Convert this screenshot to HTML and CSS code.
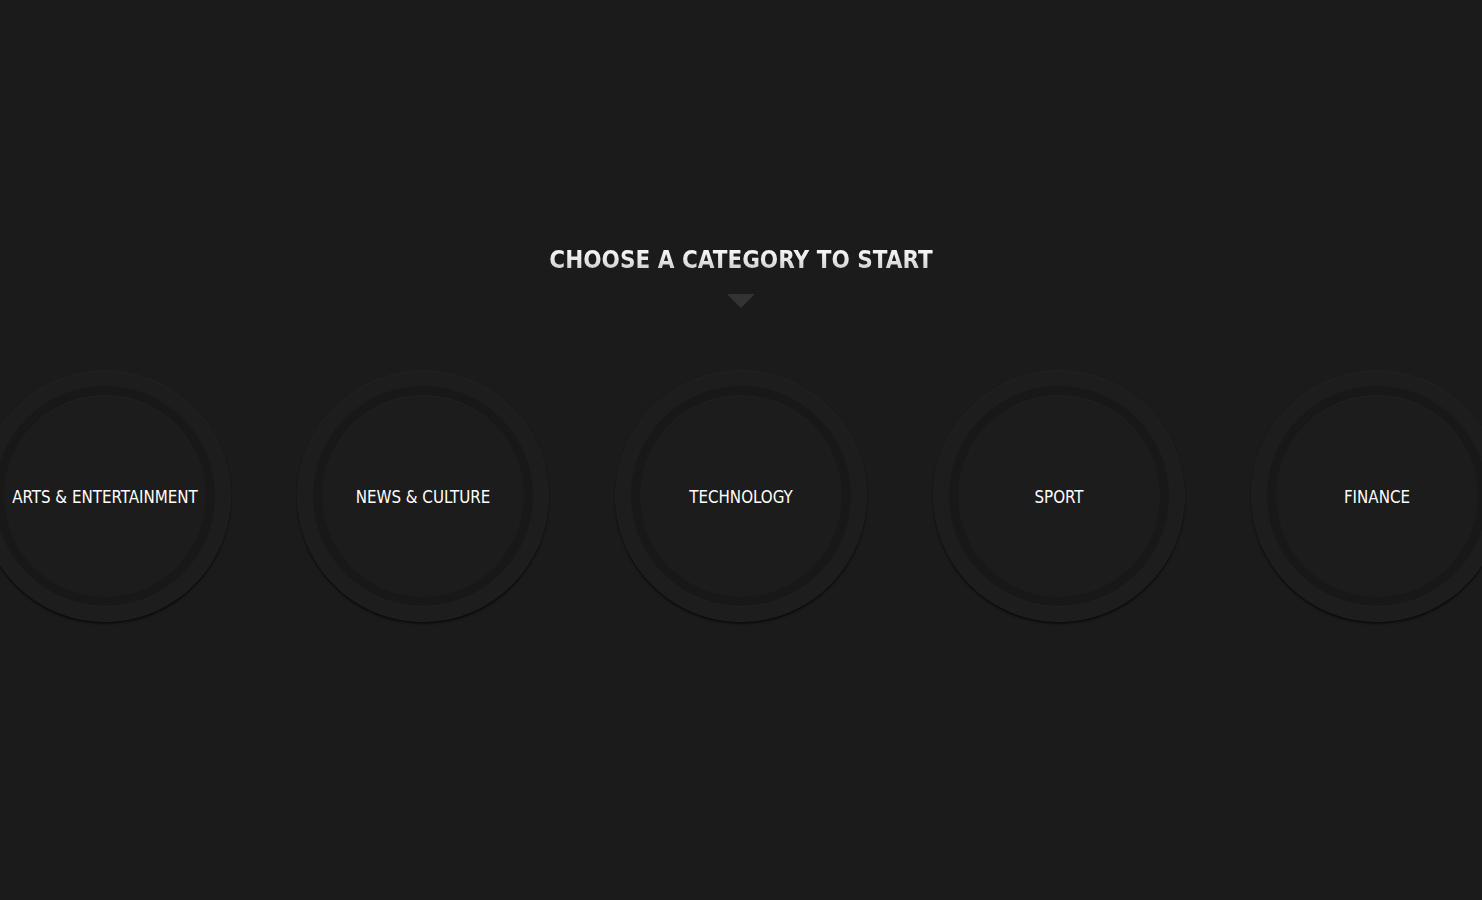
FILE: index.html
```html
<!DOCTYPE html>
<html lang="en">
<head>
<meta charset="utf-8">
<title>Choose a category</title>
<link rel="stylesheet" href="styles.css">
</head>
<body>
<main class="page">
  <header class="intro">
    <h1 class="title">CHOOSE A CATEGORY TO START</h1>
    <span class="arrow"></span>
  </header>
  <nav class="categories">
    <a class="cat" href="#"><span class="ring"><span class="face">ARTS &amp; ENTERTAINMENT</span></span></a>
    <a class="cat" href="#"><span class="ring"><span class="face">NEWS &amp; CULTURE</span></span></a>
    <a class="cat" href="#"><span class="ring"><span class="face">TECHNOLOGY</span></span></a>
    <a class="cat" href="#"><span class="ring"><span class="face">SPORT</span></span></a>
    <a class="cat" href="#"><span class="ring"><span class="face">FINANCE</span></span></a>
  </nav>
</main>
</body>
</html>
```

FILE: styles.css
```css
html, body {
  margin: 0;
  padding: 0;
  background: #1b1b1b;
  height: 100%;
  overflow: hidden;
}

.page {
  display: flex;
  flex-direction: column;
  align-items: center;
  padding-top: 244px;
  font-family: "DejaVu Sans Condensed", "DejaVu Sans", Tahoma, sans-serif;
}

.intro {
  display: flex;
  flex-direction: column;
  align-items: center;
}

.title {
  margin: 0;
  font-size: 24px;
  line-height: 32px;
  font-weight: bold;
  background: linear-gradient(180deg, #ffffff 0%, #e6e6e6 50%, #bdbdbd 100%);
  -webkit-background-clip: text;
  background-clip: text;
  color: transparent;
}

.arrow {
  margin-top: 18px;
  width: 0;
  height: 0;
  border-left: 14px solid transparent;
  border-right: 14px solid transparent;
  border-top: 14px solid #333333;
}

.categories {
  margin-top: 62px;
  display: flex;
  justify-content: center;
  width: 1590px;
  flex-shrink: 0;
}

.cat {
  box-sizing: border-box;
  flex: 0 0 318px;
  display: flex;
  justify-content: center;
  text-decoration: none;
}

.cat > .ring {
  box-sizing: border-box;
  width: 252px;
  height: 252px;
  border-radius: 50%;
  padding: 15px;
  background: #1d1d1d;
  border: 1px solid #202020;
  box-shadow: 0 2px 2px rgba(0, 0, 0, 0.55), inset 0 1px 0 rgba(255, 255, 255, 0.02);
  display: flex;
}

.ring .face {
  box-sizing: border-box;
  width: 220px;
  height: 220px;
  border-radius: 50%;
  border: 9px solid #181818;
  background: #1c1c1c;
  box-shadow: inset 0 1px 0 #222222, 0 1px 0 #212121;
  display: flex;
  align-items: center;
  justify-content: center;
  padding-top: 2px;
  color: #ffffff;
  font-size: 16.8px;
  white-space: nowrap;
}
```
